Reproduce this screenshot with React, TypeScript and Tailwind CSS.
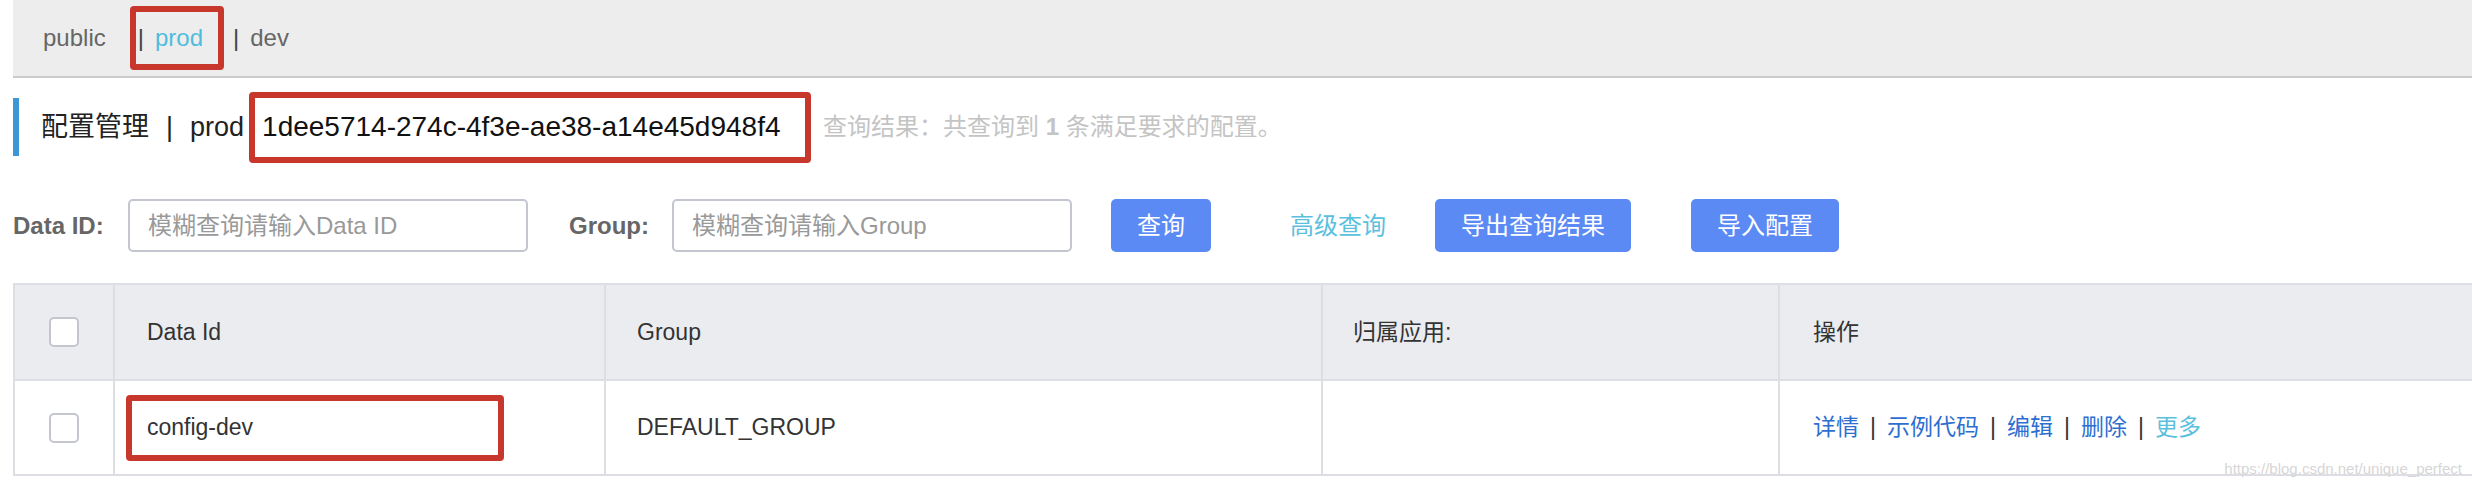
export default function App() {
  const line = 'border-[#dcdee3]'
  return (
    <div className="relative h-[488px] w-[2472px] overflow-hidden bg-white font-[family-name:'Liberation_Sans','Noto_Sans_CJK_SC',sans-serif] text-[#333]">
      {/* 命名空间 */}
      <div className="ml-[13px] flex h-[78px] items-center border-b-2 border-[#cccccc] bg-[#ededed] pl-[30px] text-[24px] leading-none text-[#666]">
        <span>public</span>
        <span className="ml-[24px] flex h-[64px] items-center rounded-[4px] border-[6px] border-[#c8372c] pl-[2px] pr-[15px]">
          <span className="text-[#444]">|</span>
          <span className="ml-[11px] text-[#4fbde0]">prod</span>
        </span>
        <span className="ml-[9px] text-[#444]">|</span>
        <span className="ml-[11px]">dev</span>
      </div>

      {/* 标题 */}
      <div className="ml-[13px] mt-[20px] flex h-[58px] items-center border-l-[6px] border-[#3d97d6] pl-[22px] text-[27px] leading-none text-[#222]">
        <span>配置管理</span>
        <span className="mx-[17px]">|</span>
        <span>prod</span>
        <span className="ml-[5px] flex h-[71px] w-[562px] items-center rounded-[4px] border-[6px] border-[#c8372c] pl-[7px] text-[28px] text-[#111]">
          1dee5714-274c-4f3e-ae38-a14e45d948f4
        </span>
        <span className="ml-[12px] text-[24px] text-[#c4c4c4]">
          查询结果：共查询到 <b>1</b> 条满足要求的配置。
        </span>
      </div>

      {/* 筛选 */}
      <div className="ml-[13px] mt-[43px] flex h-[53px] items-center text-[24px] leading-none">
        <label className="w-[115px] font-bold text-[#666]">Data ID:</label>
        <input
          readOnly
          placeholder="模糊查询请输入Data ID"
          className="h-[53px] w-[400px] rounded-[5px] border-2 border-[#c4c6cf] pl-[18px] outline-none placeholder:text-[#999]"
        />
        <label className="ml-[41px] w-[103px] font-bold text-[#666]">Group:</label>
        <input
          readOnly
          placeholder="模糊查询请输入Group"
          className="h-[53px] w-[400px] rounded-[5px] border-2 border-[#c4c6cf] pl-[18px] outline-none placeholder:text-[#999]"
        />
        <button className="ml-[39px] h-[53px] w-[100px] rounded-[5px] bg-[#5c8af5] text-white">查询</button>
        <span className="ml-[79px] text-[#5bc0de]">高级查询</span>
        <button className="ml-[49px] h-[53px] w-[196px] rounded-[5px] bg-[#5c8af5] text-white">导出查询结果</button>
        <button className="ml-[60px] h-[53px] w-[148px] rounded-[5px] bg-[#5c8af5] text-white">导入配置</button>
      </div>

      {/* 列表 */}
      <div className={`ml-[13px] mt-[31px] border-l-2 border-t-2 ${line} text-[23px] leading-none`}>
        <div className={`grid h-[96px] grid-cols-[100px_491px_717px_457px_1fr] border-b-2 ${line} bg-[#ebecf0]`}>
          <div className={`flex items-center justify-center border-r-2 ${line}`}>
            <span className="h-[30px] w-[30px] rounded-[5px] border-2 border-[#c4c6cf] bg-white" />
          </div>
          <div className={`flex items-center border-r-2 ${line} pl-[32px]`}>Data Id</div>
          <div className={`flex items-center border-r-2 ${line} pl-[31px]`}>Group</div>
          <div className={`flex items-center border-r-2 ${line} pl-[30px]`}>归属应用:</div>
          <div className="flex items-center pl-[33px]">操作</div>
        </div>
        <div className={`grid h-[95px] grid-cols-[100px_491px_717px_457px_1fr] border-b-2 ${line}`}>
          <div className={`flex items-center justify-center border-r-2 ${line}`}>
            <span className="h-[30px] w-[30px] rounded-[5px] border-2 border-[#c4c6cf] bg-white" />
          </div>
          <div className={`flex items-center border-r-2 ${line}`}>
            <div className="ml-[11px] flex h-[66px] w-[378px] items-center rounded-[4px] border-[6px] border-[#c8372c] pl-[15px]">
              config-dev
            </div>
          </div>
          <div className={`flex items-center border-r-2 ${line} pl-[31px]`}>DEFAULT_GROUP</div>
          <div className={`border-r-2 ${line}`} />
          <div className="flex items-center pl-[33px] text-[#2d6fd0]">
            <a>详情</a>
            <span className="mx-[11px] text-[#333]">|</span>
            <a>示例代码</a>
            <span className="mx-[11px] text-[#333]">|</span>
            <a>编辑</a>
            <span className="mx-[11px] text-[#333]">|</span>
            <a>删除</a>
            <span className="mx-[11px] text-[#333]">|</span>
            <a className="text-[#5bc0de]">更多</a>
          </div>
        </div>
      </div>

      <span className="absolute bottom-[12px] right-[10px] text-[15px] leading-none text-[#d6d6d6]">
        https://blog.csdn.net/unique_perfect
      </span>
    </div>
  )
}
